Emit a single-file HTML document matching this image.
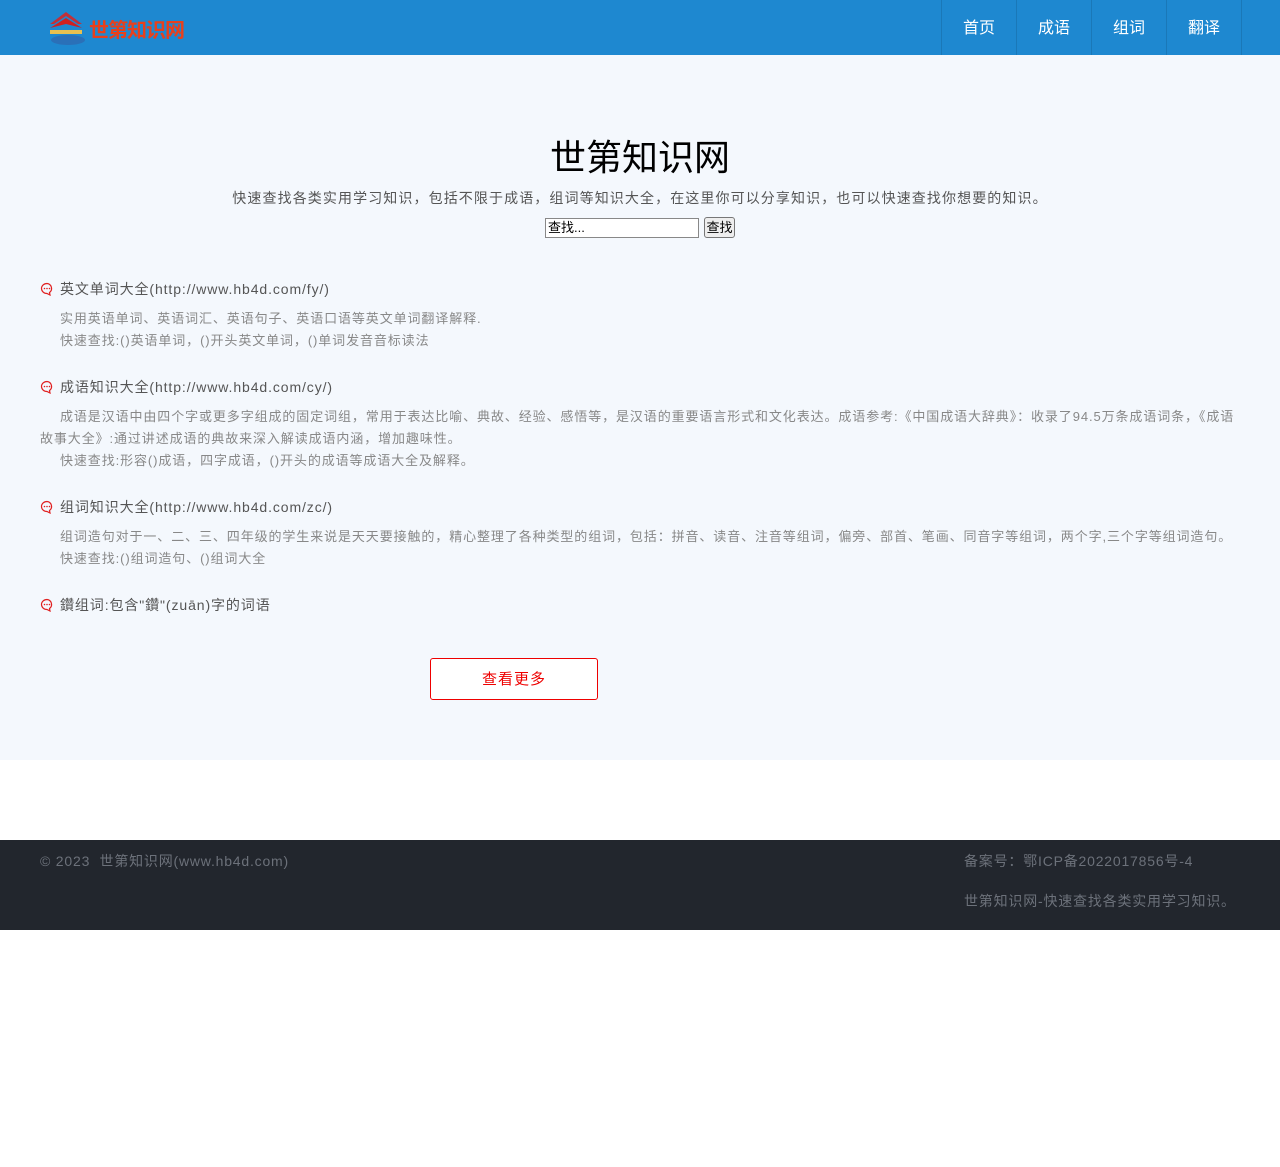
<!DOCTYPE html>
<html><head><meta charset="utf-8"><style>
*{margin:0;padding:0;box-sizing:border-box}
body{width:1280px;height:1167px;background:#fff;font-family:"Liberation Sans","Noto Sans CJK SC",sans-serif;position:relative}
.hd{position:absolute;left:0;top:0;width:1280px;height:55px;background:#1e88d0}
.logo{position:absolute;left:48px;top:10px}
.logot{position:absolute;left:89px;top:14px;color:#e8401c;font-size:20px;font-weight:bold;letter-spacing:-1px}
.nav{position:absolute;left:941px;top:0;height:55px;display:flex;border-left:1px solid #1a78b8}
.nav a{width:75px;height:55px;line-height:57px;text-align:center;color:#fff;font-size:16px;border-right:1px solid #1a78b8;text-decoration:none}
.main{position:absolute;left:0;top:55px;width:1280px;height:705px;background:#f4f8fd}
h1{position:absolute;top:74px;width:1280px;text-align:center;font-size:36px;font-weight:normal;color:#000}
.sub{position:absolute;top:133px;width:1280px;text-align:center;font-size:14px;color:#555;letter-spacing:1.1px}
.srch{position:absolute;top:163px;left:545px}
.srch .in{position:absolute;left:0;top:0;width:154px;height:20px;border:1px solid #888;background:#fff;font-size:13px;padding-left:2px;line-height:18px}
.srch .bt{position:absolute;left:159px;top:-1px;width:31px;height:21px;border:1px solid #777;border-radius:3px;background:#eee;font-size:13px;line-height:19px;text-align:center}
.it{position:absolute;left:40px;width:1200px;letter-spacing:0.9px}
.it .t{font-size:14px;color:#555;height:22px;line-height:23px;padding-left:20px;position:relative}
.it .t svg{position:absolute;left:0;top:4px}
.it p{font-size:13px;color:#888;line-height:22px;text-indent:20px;margin-top:8px}
.it p+p{margin-top:0}
.more{position:absolute;left:430px;top:603px;width:168px;height:42px;border:1px solid #e00;border-radius:3px;color:#e00;font-size:15px;text-align:center;line-height:41px;background:#fff;letter-spacing:1px}
.ft{position:absolute;left:0;top:840px;width:1280px;height:90px;background:#22262d;color:#6c717a;font-size:14px;letter-spacing:0.8px}
</style></head><body>
<div class="hd">
<svg class="logo" width="40" height="36" viewBox="0 0 40 36"><path d="M2 14 L18 2 L34 14 L30 14 L18 6 L6 14Z" fill="#c0303a"/><path d="M2 18 L18 8 L34 18 L18 14Z" fill="#d02020"/><path d="M2 20 L34 20 L34 24 L2 24Z" fill="#e8c050"/><ellipse cx="20" cy="30" rx="17" ry="5" fill="#2a70b8"/></svg>
<div class="logot">世第知识网</div>
<div class="nav"><a>首页</a><a>成语</a><a>组词</a><a>翻译</a></div>
</div>
<div class="main">
<h1>世第知识网</h1>
<div class="sub">快速查找各类实用学习知识，包括不限于成语，组词等知识大全，在这里你可以分享知识，也可以快速查找你想要的知识。</div>
<div class="srch"><div class="in">查找...</div><div class="bt">查找</div></div>
<div class="it" style="top:223px"><div class="t"><svg width="14" height="14" viewBox="0 0 14 14"><path d="M7 1.5a5.5 5 0 1 0 0 10 l3 1.5 -0.5-2.5 A5 5 0 0 0 7 1.5z" fill="none" stroke="#e02020" stroke-width="1.2"/><circle cx="4.5" cy="6.5" r=".8" fill="#e02020"/><circle cx="7" cy="6.5" r=".8" fill="#e02020"/><circle cx="9.5" cy="6.5" r=".8" fill="#e02020"/></svg>英文单词大全(http://www.hb4d.com/fy/)</div><p>实用英语单词、英语词汇、英语句子、英语口语等英文单词翻译解释.</p><p>快速查找:()英语单词，()开头英文单词，()单词发音音标读法</p></div>
<div class="it" style="top:321px"><div class="t"><svg width="14" height="14" viewBox="0 0 14 14"><path d="M7 1.5a5.5 5 0 1 0 0 10 l3 1.5 -0.5-2.5 A5 5 0 0 0 7 1.5z" fill="none" stroke="#e02020" stroke-width="1.2"/><circle cx="4.5" cy="6.5" r=".8" fill="#e02020"/><circle cx="7" cy="6.5" r=".8" fill="#e02020"/><circle cx="9.5" cy="6.5" r=".8" fill="#e02020"/></svg>成语知识大全(http://www.hb4d.com/cy/)</div><p>成语是汉语中由四个字或更多字组成的固定词组，常用于表达比喻、典故、经验、感悟等，是汉语的重要语言形式和文化表达。成语参考:《中国成语大辞典》：收录了94.5万条成语词条，《成语故事大全》:通过讲述成语的典故来深入解读成语内涵，增加趣味性。</p><p>快速查找:形容()成语，四字成语，()开头的成语等成语大全及解释。</p></div>
<div class="it" style="top:441px"><div class="t"><svg width="14" height="14" viewBox="0 0 14 14"><path d="M7 1.5a5.5 5 0 1 0 0 10 l3 1.5 -0.5-2.5 A5 5 0 0 0 7 1.5z" fill="none" stroke="#e02020" stroke-width="1.2"/><circle cx="4.5" cy="6.5" r=".8" fill="#e02020"/><circle cx="7" cy="6.5" r=".8" fill="#e02020"/><circle cx="9.5" cy="6.5" r=".8" fill="#e02020"/></svg>组词知识大全(http://www.hb4d.com/zc/)</div><p style="white-space:nowrap">组词造句对于一、二、三、四年级的学生来说是天天要接触的，精心整理了各种类型的组词，包括：拼音、读音、注音等组词，偏旁、部首、笔画、同音字等组词，两个字,三个字等组词造句。</p><p>快速查找:()组词造句、()组词大全</p></div>
<div class="it" style="top:539px"><div class="t"><svg width="14" height="14" viewBox="0 0 14 14"><path d="M7 1.5a5.5 5 0 1 0 0 10 l3 1.5 -0.5-2.5 A5 5 0 0 0 7 1.5z" fill="none" stroke="#e02020" stroke-width="1.2"/><circle cx="4.5" cy="6.5" r=".8" fill="#e02020"/><circle cx="7" cy="6.5" r=".8" fill="#e02020"/><circle cx="9.5" cy="6.5" r=".8" fill="#e02020"/></svg>鑽组词:包含"鑽"(zuān)字的词语</div></div>
<div class="more">查看更多</div>
</div>
<div class="ft">
<div style="position:absolute;left:40px;top:11px">© 2023&nbsp; 世第知识网(www.hb4d.com)</div>
<div style="position:absolute;left:964px;top:11px">备案号：鄂ICP备2022017856号-4</div>
<div style="position:absolute;left:964px;top:51px">世第知识网-快速查找各类实用学习知识。</div>
</div>
</body></html>
